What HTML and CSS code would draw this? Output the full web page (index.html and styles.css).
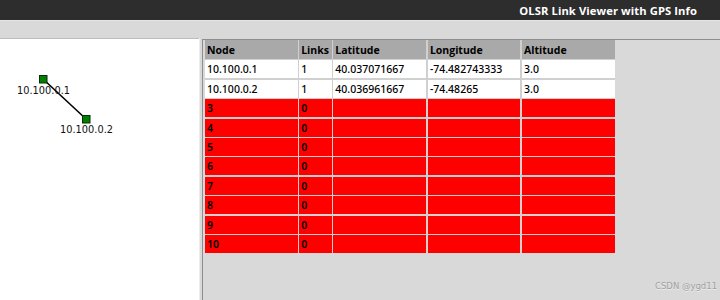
FILE: index.html
```html
<!DOCTYPE html>
<html>
<head>
<meta charset="utf-8">
<link rel="stylesheet" href="styles.css">
</head>
<body>
<div class="titlebar"><span class="title">OLSR Link Viewer with GPS Info</span></div>
<div class="toolbar"></div>
<div class="main">
  <div class="graph">
    <svg class="edges" width="199" height="262" viewBox="0 0 199 262">
      <line x1="43" y1="40" x2="86" y2="80" stroke="#000" stroke-width="1.6"/>
      <rect x="39.5" y="36.5" width="7.5" height="7.5" fill="#008000" stroke="#0d2a0d" stroke-width="1"/>
      <rect x="82.5" y="76.5" width="7.5" height="7.5" fill="#008000" stroke="#0d2a0d" stroke-width="1"/>
    </svg>
    <span class="label l1">10.100.0.1</span>
    <span class="label l2">10.100.0.2</span>
  </div>
  <div class="split"></div>
  <div class="pane">
    <div class="grid">
      <div class="h">Node</div><div class="h">Links</div><div class="h">Latitude</div><div class="h">Longitude</div><div class="h">Altitude</div>
      <div class="c">10.100.0.1</div><div class="c">1</div><div class="c">40.037071667</div><div class="c">-74.482743333</div><div class="c">3.0</div>
      <div class="c">10.100.0.2</div><div class="c">1</div><div class="c">40.036961667</div><div class="c">-74.48265</div><div class="c">3.0</div>
      <div class="c r">3</div><div class="c r">0</div><div class="c r"></div><div class="c r"></div><div class="c r"></div>
      <div class="c r">4</div><div class="c r">0</div><div class="c r"></div><div class="c r"></div><div class="c r"></div>
      <div class="c r">5</div><div class="c r">0</div><div class="c r"></div><div class="c r"></div><div class="c r"></div>
      <div class="c r">6</div><div class="c r">0</div><div class="c r"></div><div class="c r"></div><div class="c r"></div>
      <div class="c r">7</div><div class="c r">0</div><div class="c r"></div><div class="c r"></div><div class="c r"></div>
      <div class="c r">8</div><div class="c r">0</div><div class="c r"></div><div class="c r"></div><div class="c r"></div>
      <div class="c r">9</div><div class="c r">0</div><div class="c r"></div><div class="c r"></div><div class="c r"></div>
      <div class="c r">10</div><div class="c r">0</div><div class="c r"></div><div class="c r"></div><div class="c r"></div>
    </div>
  </div>
</div>
<div class="watermark">CSDN @ygd11</div>
</body>
</html>
```
FILE: styles.css
```css
html, body {
  margin: 0;
  padding: 0;
  width: 720px;
  height: 300px;
  overflow: hidden;
  background: #d9d9d9;
  font-family: "Open Sans", "DejaVu Sans", sans-serif;
}
.titlebar {
  height: 20px;
  background: #2d2d2d;
  display: flex;
  justify-content: flex-end;
  align-items: center;
  padding-right: 23px;
}
.title {
  color: #ffffff;
  font-weight: 700;
  font-size: 11.2px;
  letter-spacing: 0.1px;
}
.toolbar {
  height: 18px;
  background: #d9d9d9;
  border-top: 1px solid #e6e6e6;
  box-sizing: border-box;
}
.main {
  display: flex;
  height: 262px;
}
.graph {
  position: relative;
  width: 199px;
  background: #ffffff;
  border-top: 1px solid #bdbdbd;
  box-sizing: border-box;
  flex: none;
}
.edges {
  position: absolute;
  left: 0;
  top: 0;
}
.label {
  position: absolute;
  font-family: "DejaVu Sans", sans-serif;
  font-size: 9.8px;
  color: #111;
  line-height: 12px;
}
.l1 { left: 17px; top: 46px; }
.l2 { left: 60px; top: 85px; }
.split {
  width: 3px;
  flex: none;
  background: #d9d9d9;
  border-left: 1px solid #ececec;
  box-sizing: border-box;
}
.pane {
  flex: 1;
  margin-top: 1px;
  border-top: 1px solid #8e8e8e;
  border-left: 1px solid #8e8e8e;
  padding-left: 2px;
  background: #d9d9d9;
}
.grid {
  display: grid;
  grid-template-columns: 92.6px 32.5px 93px 92.6px 92.6px;
  grid-template-rows: 19px;
  grid-auto-rows: 18px;
  column-gap: 1.6px;
  row-gap: 1.4px;
  width: max-content;
  background: #d0d0d0;
  font-size: 10.5px;
  color: #000;
}
.h {
  background: #a9a9a9;
  font-weight: 700;
  display: flex;
  align-items: center;
  padding-left: 2px;
}
.c {
  background: #ffffff;
  font-family: "Noto Sans", "Open Sans", sans-serif;
  font-weight: 500;
  display: flex;
  align-items: center;
  padding-left: 2px;
}
.c.r {
  background: #ff0000;
  color: #000000;
  font-weight: 600;
}
.watermark {
  position: absolute;
  left: 655px;
  top: 281px;
  font-family: "DejaVu Sans", sans-serif;
  font-size: 8.5px;
  color: #a0a0a0;
  text-shadow: 0 1px 0 #eeeeee;
}
```
